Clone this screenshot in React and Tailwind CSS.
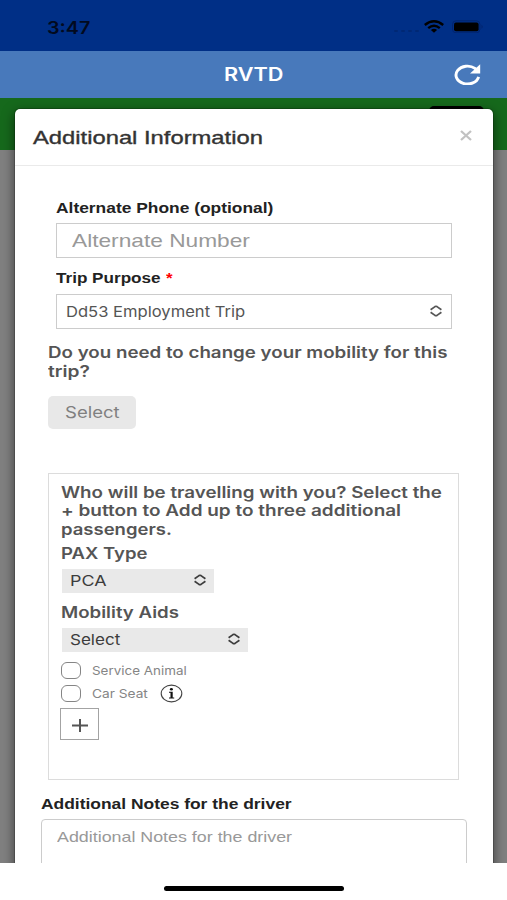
import { useLayoutEffect, useRef, useState } from "react";

// Single line of text, widened to fill the given width
function WideText({ width, className = "", children }) {
  const ref = useRef(null);
  const [scale, setScale] = useState(1.2);

  useLayoutEffect(() => {
    setScale(width / ref.current.offsetWidth);
  }, [width]);

  return (
    <span className={`flex shrink-0 ${className}`} style={{ width }}>
      <span
        ref={ref}
        className="inline-block shrink-0 origin-left whitespace-nowrap"
        style={{ transform: `scaleX(${scale})` }}
      >
        {children}
      </span>
    </span>
  );
}

function Chevrons({ className = "" }) {
  return (
    <svg viewBox="0 0 12 12" className={`h-3 w-3 shrink-0 ${className}`} fill="none" stroke="currentColor" strokeWidth="1.7">
      <path d="M0.6 4.8 L5 1.6 Q6 1 7 1.6 L11.4 4.8 M0.6 7.2 L5 10.4 Q6 11 7 10.4 L11.4 7.2" />
    </svg>
  );
}

function StatusBar() {
  return (
    <div className="flex h-[51px] items-start justify-between bg-[#002f86] pl-[47px] pr-[23px] text-[#020a1e]">
      <WideText width={43} className="mt-[18px] font-[Inter,sans-serif] text-[17px] leading-[21px] font-semibold">
        3:47
      </WideText>
      <div className="mt-[20px] flex items-center">
        <div className="mt-[9px] mr-[5px] flex gap-[3px]">
          {[0, 1, 2, 3].map((dot) => (
            <span key={dot} className="h-[2px] w-[4px] rounded-full bg-[#002874]" />
          ))}
        </div>
        <svg viewBox="0 0 20 13" className="h-[13px] w-[20px] text-black" fill="none" stroke="currentColor" strokeWidth="2.4">
          <path d="M0.8 5 Q10 -2.4 19.2 5" />
          <path d="M4.2 8.2 Q10 3.2 15.8 8.2" />
          <path d="M6.9 10 Q10 7.6 13.1 10 L10 12.8 Z" fill="currentColor" stroke="none" />
        </svg>
        <svg viewBox="0 0 32 13" className="ml-[8px] h-[13px] w-[32px]">
          <rect x="0.5" y="0.8" width="27.4" height="12" rx="3.5" fill="none" stroke="#00246e" />
          <rect x="2" y="2.4" width="24.6" height="8.8" rx="2" fill="#000" />
          <path d="M29.5 4.8 Q32 6.8 29.5 8.8 Z" fill="#00246e" />
        </svg>
      </div>
    </div>
  );
}

function TitleBar() {
  return (
    <div className="grid h-[47px] grid-cols-[1fr_auto_1fr] items-center bg-[#4879bb] text-white">
      <span />
      <WideText width={59} className="font-[Inter,sans-serif] text-[18px] leading-6 font-semibold">
        RVTD
      </WideText>
      <button className="mr-[26px] justify-self-end" aria-label="Refresh">
        <svg viewBox="0 0 27 21" className="h-[21px] w-[27px]" fill="none" stroke="currentColor" strokeWidth="2.9">
          <path d="M24.6 12.8 A11.4 8.9 0 1 1 21 4.4 L22.4 5.6" />
          <path d="M26.2 0.2 V9.4 H16 Z" fill="currentColor" stroke="none" />
        </svg>
      </button>
    </div>
  );
}

function CheckRow({ label, width, children }) {
  return (
    <div className="flex h-[23px] items-center">
      <span className="mb-px h-[17px] w-[20px] rounded-[6px] border-[1.5px] border-[#858585] bg-white" />
      <WideText width={width} className="ml-[11px] text-[12px] text-[#858585]">
        {label}
      </WideText>
      {children}
    </div>
  );
}

function TravellersBox() {
  return (
    <div className="mr-[34px] ml-[33px] mt-[44px] h-[307px] border border-[#dcdcdc] pt-[10px] pl-[12px] font-[Inter,sans-serif] text-[#555]">
      <div className="text-[15.5px] leading-[18.4px] font-semibold">
        <WideText width={381}>Who will be travelling with you? Select the</WideText>
        <WideText width={340}>+ button to Add up to three additional</WideText>
        <WideText width={111}>passengers.</WideText>
        <WideText width={86} className="mt-[6px]">PAX Type</WideText>
      </div>
      <div className="mt-[5px] ml-px flex h-[24px] w-[152px] items-center justify-between bg-[#e9e9e9] pr-[8px] pl-[8px] text-[#3c3c3c]">
        <WideText width={37} className="mt-px text-[15px]">PCA</WideText>
        <Chevrons className="mb-[2px]" />
      </div>
      <WideText width={118} className="mt-[10px] text-[15.5px] leading-[20px] font-semibold">Mobility Aids</WideText>
      <div className="mt-[5px] ml-px flex h-[24px] w-[186px] items-center justify-between bg-[#e9e9e9] pr-[8px] pl-[8px] text-[#3c3c3c]">
        <WideText width={50} className="mt-[2px] text-[15px]">Select</WideText>
        <Chevrons className="mb-[2px]" />
      </div>
      <div className="mt-[8px]">
        <CheckRow label="Service Animal" width={95} />
        <CheckRow label="Car Seat" width={56}>
          <svg viewBox="0 0 23 19" className="mb-px ml-[12px] h-[19px] w-[23px]">
            <ellipse cx="11.5" cy="9.5" rx="10.3" ry="8.4" fill="none" stroke="#444" strokeWidth="1.1" />
            <ellipse cx="11.4" cy="5.2" rx="1.5" ry="1.3" fill="#111" />
            <path d="M9 7.8 H12.7 V13.6 H14.2 V14.5 H9 V13.6 H10.5 V8.7 H9 Z" fill="#111" />
          </svg>
        </CheckRow>
      </div>
      <button className="-ml-px mt-[2px] flex h-[32px] w-[39px] items-center justify-center border border-[#a3a3a3] pt-[4px]" aria-label="Add passenger">
        <svg viewBox="0 0 16 13" className="h-[13px] w-[16px]" fill="none" stroke="#555" strokeWidth="2">
          <path d="M0 6.5 H16 M8 0 V13" />
        </svg>
      </button>
    </div>
  );
}

function InformationModal() {
  return (
    <div className="relative mr-[13px] ml-[14px] mt-[10px] h-[760px] rounded-t-[6px] border border-[#00000030] bg-white bg-clip-padding shadow-[0_4px_12px_rgba(0,0,0,0.5)]">
      <div className="flex h-[57px] items-center justify-between border-b border-[#eaeaea] pr-[21px] pl-[18px]">
        <WideText width={230} className="mt-[2px] text-[18.5px] text-[#333] [-webkit-text-stroke:0.35px_#333]">
          Additional Information
        </WideText>
        <svg viewBox="0 0 12 11" className="mb-[4px] h-[11px] w-[12px]" stroke="#c2c2c2" strokeWidth="2.3">
          <path d="M1 1 L11 10 M11 1 L1 10" />
        </svg>
      </div>

      <div className="px-[41px] pt-[32px]">
        <WideText width={217} className="text-[14.5px] leading-[20px] font-bold text-[#222]">
          Alternate Phone (optional)
        </WideText>
        <div className="mt-[5px] flex h-[35px] items-center border border-[#ccc] pl-[15px]">
          <WideText width={178} className="mt-[2px] text-[19px] text-[#999]">Alternate Number</WideText>
        </div>
        <div className="mt-[11px] flex h-[20px] items-center text-[14.5px] font-bold text-[#222]">
          <WideText width={105}>Trip Purpose</WideText>
          <WideText width={7} className="ml-[5px] text-[#f00]">*</WideText>
        </div>
        <div className="mt-[5px] flex h-[35px] items-center justify-between border border-[#ccc] pr-[9px] pl-[9px] font-[Inter,sans-serif] text-[#555]">
          <WideText width={179} className="mt-px text-[15px]">Dd53 Employment Trip</WideText>
          <Chevrons className="mb-px" />
        </div>
      </div>

      <div className="px-[33px] pt-[15px] font-[Inter,sans-serif] text-[15.5px] leading-[18.5px] font-semibold text-[#555]">
        <WideText width={400}>Do you need to change your mobility for this</WideText>
        <WideText width={42}>trip?</WideText>
        <button className="mt-[15px] flex h-[33px] w-[88px] items-center justify-center rounded-[5px] bg-[#e8e8e8] pt-px font-normal text-[#808080]">
          <WideText width={55}>Select</WideText>
        </button>
      </div>

      <TravellersBox />

      <div className="px-[26px] pt-[14px]">
        <WideText width={251} className="text-[14.5px] leading-[20px] font-bold text-[#222]">
          Additional Notes for the driver
        </WideText>
        <div className="mt-[5px] h-[80px] rounded-[4px] border border-[#ccc] pt-[7px] pl-[15px]">
          <WideText width={235} className="text-[14.5px] leading-[20px] text-[#999]">
            Additional Notes for the driver
          </WideText>
        </div>
      </div>
    </div>
  );
}

export default function App() {
  return (
    <div className="h-[900px] w-[507px] overflow-hidden bg-white font-['Liberation_Sans',Arial,sans-serif]">
      <StatusBar />
      <TitleBar />
      <div className="relative flow-root h-[765px] overflow-hidden bg-[#808080]">
        {/* dimmed page behind the dialog */}
        <div className="absolute inset-x-0 top-0 h-[52px] bg-[#16691c]">
          <div className="ml-[429px] mt-[8px] h-[20px] w-[55px] rounded-[5px] bg-black" />
        </div>
        <InformationModal />
      </div>
      <div className="flex h-[37px] justify-center pt-[23px]">
        <div className="h-[5px] w-[180px] rounded-full bg-black" />
      </div>
    </div>
  );
}
